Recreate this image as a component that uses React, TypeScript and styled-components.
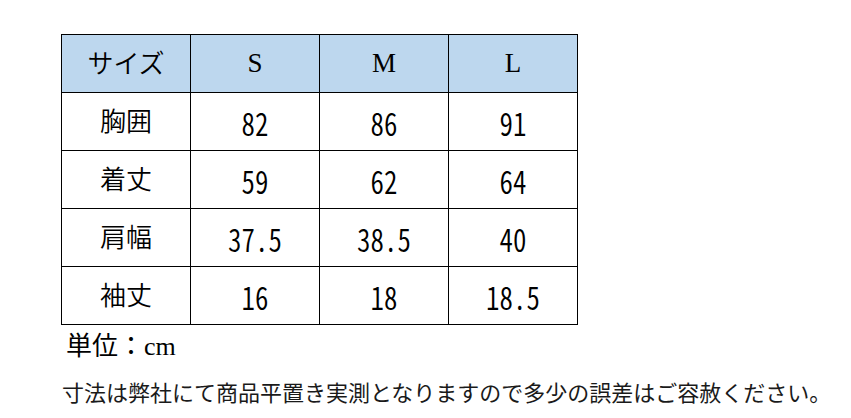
import React from "react";
import styled, { createGlobalStyle } from "styled-components";

const GlobalStyle = createGlobalStyle`
  html, body {
    margin: 0;
    padding: 0;
    background: #ffffff;
  }
`;

const Page = styled.div`
  padding: 34px 0 0 61px;
  font-family: "Noto Sans CJK JP", sans-serif;
  color: #000;
`;

const SizeTable = styled.table`
  border-collapse: collapse;
  table-layout: fixed;
`;

const Cell = styled.td<{ $head?: boolean }>`
  width: 128px;
  height: 57px;
  padding: 0;
  border: 1px solid #000;
  text-align: center;
  vertical-align: middle;
  background: ${(p) => (p.$head ? "#bdd7ee" : "#ffffff")};
`;

const JpLabel = styled.span`
  font-family: "Noto Sans CJK JP", sans-serif;
  font-size: 26px;
  font-weight: 350;
  line-height: 1;
`;

const Latin = styled.span`
  font-family: "Liberation Serif", serif;
  font-size: 27px;
  line-height: 1;
`;

const Num = styled.span`
  display: inline-block;
  font-family: "Noto Sans CJK JP", sans-serif;
  font-feature-settings: "hwid" 1;
  font-size: 32px;
  font-weight: 350;
  line-height: 1;
  transform: scaleX(0.84);
  margin-top: 3px;
`;

const Unit = styled.div`
  margin-top: 4px;
  padding-left: 5px;
  font-size: 26px;
  line-height: 30px;
  font-weight: 400;
  span {
    font-family: "Liberation Serif", serif;
  }
`;

const Note = styled.div`
  margin-top: 14px;
  padding-left: 1px;
  font-size: 22px;
  line-height: 30px;
  white-space: nowrap;
  color: #1a1a1a;
`;

const rows = [
  ["胸囲", "82", "86", "91"],
  ["着丈", "59", "62", "64"],
  ["肩幅", "37.5", "38.5", "40"],
  ["袖丈", "16", "18", "18.5"],
];

export default function App() {
  return (
    <Page>
      <GlobalStyle />
      <SizeTable>
        <tbody>
          <tr>
            <Cell $head>
              <JpLabel>サイズ</JpLabel>
            </Cell>
            {["S", "M", "L"].map((s) => (
              <Cell $head key={s}>
                <Latin>{s}</Latin>
              </Cell>
            ))}
          </tr>
          {rows.map(([label, ...vals]) => (
            <tr key={label}>
              <Cell>
                <JpLabel>{label}</JpLabel>
              </Cell>
              {vals.map((v, i) => (
                <Cell key={i}>
                  <Num>{v}</Num>
                </Cell>
              ))}
            </tr>
          ))}
        </tbody>
      </SizeTable>
      <Unit>
        単位：<span>cm</span>
      </Unit>
      <Note>
        寸法は弊社にて商品平置き実測となりますので多少の誤差はご容赦ください。
      </Note>
    </Page>
  );
}
